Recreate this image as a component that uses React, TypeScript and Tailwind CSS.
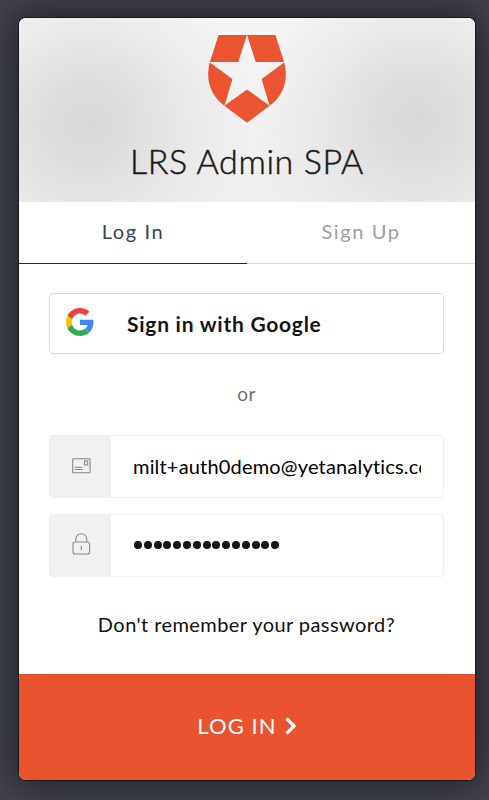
import React from "react";

function ShieldLogo() {
  return (
    <svg className="h-[88px] w-[78px]" viewBox="0 0 78 88" fill="#eb5430">
      <path d="M10.6 0H38.9L30.3 27H1.9Z" />
      <path d="M39.1 0H67.4L76.1 27H47.7Z" />
      <path d="M1.9 27.4L24.4 43.9L16.4 70.8C2.6 60.8-3 44.5 1.9 27.4Z" />
      <path d="M76.1 27.4L53.6 43.9L61.6 70.8C75.4 60.8 81 44.5 76.1 27.4Z" />
      <path d="M16.4 70.8L39 54.6L61.6 70.8L39 87.7Z" />
    </svg>
  );
}

function GoogleLogo() {
  return (
    <svg className="size-7" viewBox="0 0 48 48">
      <path fill="#EA4335" d="M24 9.5c3.54 0 6.71 1.22 9.21 3.6l6.85-6.85C35.9 2.38 30.47 0 24 0 14.62 0 6.51 5.38 2.56 13.22l7.98 6.19C12.43 13.72 17.74 9.5 24 9.5z" />
      <path fill="#4285F4" d="M46.98 24.55c0-1.57-.15-3.09-.38-4.55H24v9.02h12.94c-.58 2.96-2.26 5.48-4.78 7.18l7.73 6c4.51-4.18 7.09-10.36 7.09-17.65z" />
      <path fill="#FBBC05" d="M10.53 28.59c-.48-1.45-.76-2.99-.76-4.59s.27-3.14.76-4.59l-7.98-6.19C.92 16.46 0 20.12 0 24c0 3.88.92 7.54 2.56 10.78l7.97-6.19z" />
      <path fill="#34A853" d="M24 48c6.48 0 11.93-2.13 15.89-5.81l-7.73-6c-2.15 1.45-4.92 2.3-8.16 2.3-6.26 0-11.57-4.22-13.47-9.91l-7.98 6.19C6.51 42.62 14.62 48 24 48z" />
    </svg>
  );
}

function MailIcon() {
  return (
    <svg className="mb-[2px] h-4 w-[19px]" viewBox="0 0 19 16" fill="none" stroke="#888" strokeWidth="1.1">
      <rect x="0.7" y="0.7" width="17.4" height="14" rx="0.4" />
      <rect x="12.5" y="2.9" width="3.2" height="4" />
      <path d="M2.7 9.2H10.4M2.7 11.5H10.4" />
    </svg>
  );
}

function LockIcon() {
  return (
    <svg className="mb-[3px] h-[22px] w-[19px]" viewBox="0 0 19 22" fill="none" stroke="#888" strokeWidth="1.1">
      <rect x="1" y="9" width="16.6" height="12" rx="2" />
      <path d="M3.8 9V6.2a5.5 5.5 0 0 1 11 0V9M9.3 12.8v4.4" />
    </svg>
  );
}

function Field({ icon, children }: { icon: React.ReactNode; children: React.ReactNode }) {
  return (
    <div className="flex h-[63px] overflow-hidden rounded-[4px] border border-[#eeeeee] bg-[#f1f1f1]">
      <div className="flex w-[61px] shrink-0 items-center justify-center pl-[2px]">{icon}</div>
      <div className="flex min-w-0 flex-1 items-center rounded-r-[3px] bg-white pr-[22px] pb-[2px] pl-[22px]">{children}</div>
    </div>
  );
}

export default function App() {
  return (
    <div className="h-[800px] w-[489px] overflow-hidden bg-[#44464e] pt-[18px] pl-[19px] font-['Lato',sans-serif] text-black">
      <div className="h-[762px] w-[456px] rounded-[7px] shadow-[0_0_0_1px_#17171f,0_0_42px_8px_rgba(16,16,22,0.65)]">
        <div className="flex h-full flex-col overflow-hidden rounded-[7px] bg-white">
          <header className="flex h-[184px] flex-col items-center bg-[radial-gradient(ellipse_165px_160px_at_15%_57%,#d8d8d8_0%,rgba(218,218,218,0.85)_25%,rgba(226,226,226,0.55)_60%,transparent_100%),radial-gradient(ellipse_165px_160px_at_87%_55%,#d8d8d8_0%,rgba(218,218,218,0.85)_25%,rgba(226,226,226,0.55)_60%,transparent_100%),linear-gradient(#f5f5f5,#efefef)] pt-[17px]">
            <ShieldLogo />
            <h1 className="mt-[16px] text-[34px] leading-[44px] font-light tracking-[0.6px] text-[#1a1a1a] [-webkit-text-stroke:0.5px_#1a1a1a]">LRS Admin SPA</h1>
          </header>

          <nav className="flex h-[62px] text-center text-[20px] leading-[57px] tracking-[1.6px]">
            <button className="w-[228px] border-b border-[#112a3e] pb-[3px] text-[#344551]">Log In</button>
            <button className="flex-1 border-b border-[#d8d8da] pb-[3px] text-[#9a9fa4]">Sign Up</button>
          </nav>

          <main className="flex h-[410px] flex-col pr-[31px] pl-[30px] pt-[29px]">
            <button className="flex h-[61px] shrink-0 items-center rounded-[4px] border border-[#dadada] pl-[16px]">
              <span className="mb-[3px]"><GoogleLogo /></span>
              <span className="ml-[33px] text-[21px] leading-6 font-bold tracking-[0.75px] text-[#151515]">Sign in with Google</span>
            </button>
            <p className="mt-[28px] mb-[29px] text-center text-[19px] leading-6 tracking-[0.5px] text-[#707070]">or</p>
            <Field icon={<MailIcon />}>
              <span className="overflow-hidden text-[20px] leading-7 tracking-[0.18px] whitespace-nowrap">milt+auth0demo@yetanalytics.com</span>
            </Field>
            <div className="h-4 shrink-0" />
            <Field icon={<LockIcon />}>
              <span className="flex gap-[1.8px] pt-[1px] pl-[1px]">
                {Array.from({ length: 15 }, (_, i) => (
                  <span key={i} className="size-2 rounded-full bg-[#151515]" />
                ))}
              </span>
            </Field>
            <a className="mt-[33px] text-center text-[20px] leading-7 tracking-[0.43px] whitespace-nowrap text-[#111]">Don't remember your password?</a>
          </main>

          <button className="flex h-[106px] items-center justify-center bg-[#ea5330] pb-[2px] text-white">
            <span className="text-[22px] leading-7 tracking-[1.1px]">LOG IN</span>
            <svg className="ml-[8px] h-[18px] w-[12px]" viewBox="0 0 12 18" fill="none" stroke="white" strokeWidth="3.2">
              <path d="M1.5 1.5L9 9L1.5 16.5" />
            </svg>
          </button>
        </div>
      </div>
    </div>
  );
}
